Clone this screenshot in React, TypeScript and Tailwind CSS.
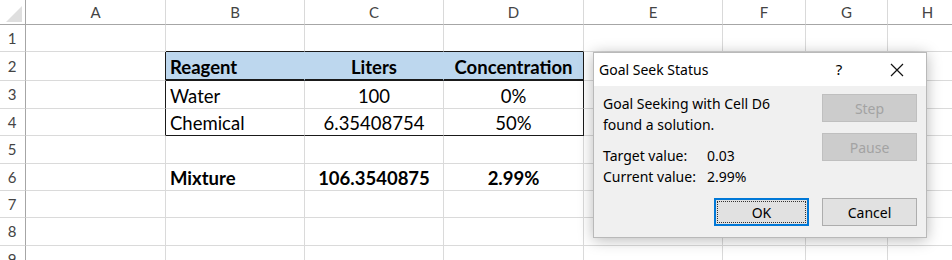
import React from "react";

type Col = { k: string; w: string };
const cols: Col[] = [
  { k: "A", w: "w-[140px]" },
  { k: "B", w: "w-[139px]" },
  { k: "C", w: "w-[139px]" },
  { k: "D", w: "w-[140px]" },
  { k: "E", w: "w-[139px]" },
  { k: "F", w: "w-[83px]" },
  { k: "G", w: "w-[82px]" },
  { k: "H", w: "w-[80px]" },
];

const rowHeights: Record<number, string> = {
  1: "h-[27px]",
  2: "h-[29px]",
  3: "h-[28px]",
  4: "h-[27px]",
  5: "h-[28px]",
  6: "h-[27px]",
  7: "h-[27px]",
  8: "h-[28px]",
  9: "h-[28px]",
};

type CellData = { t: string; align: "l" | "c"; bold?: boolean };
const data: Record<string, CellData> = {
  B2: { t: "Reagent", align: "l", bold: true },
  C2: { t: "Liters", align: "c", bold: true },
  D2: { t: "Concentration", align: "c", bold: true },
  B3: { t: "Water", align: "l" },
  C3: { t: "100", align: "c" },
  D3: { t: "0%", align: "c" },
  B4: { t: "Chemical", align: "l" },
  C4: { t: "6.35408754", align: "c" },
  D4: { t: "50%", align: "c" },
  B6: { t: "Mixture", align: "l", bold: true },
  C6: { t: "106.3540875", align: "c", bold: true },
  D6: { t: "2.99%", align: "c", bold: true },
};

function cellBorder(r: number, c: string): string {
  const inTable = r >= 2 && r <= 4 && (c === "B" || c === "C" || c === "D");
  let right = "border-r border-r-[#dadada]";
  let bottom = "border-b border-b-[#dadada]";
  let bg = "bg-white";
  if (r >= 2 && r <= 4 && (c === "A" || c === "D")) right = "border-r border-r-[#1a1a1a]";
  if (r === 1 && (c === "B" || c === "C" || c === "D")) bottom = "border-b border-b-[#1a1a1a]";
  if (r === 4 && inTable) bottom = "border-b border-b-[#1a1a1a]";
  if (r === 2 && inTable) {
    bg = "bg-[#bdd7ee]";
    bottom = "border-b-2 border-b-[#1a1a1a]";
    if (c !== "D") right = "border-r border-r-[#bdd7ee]";
  }
  return `${right} ${bottom} ${bg}`;
}

function Sheet() {
  const rows = [1, 2, 3, 4, 5, 6, 7, 8, 9];
  return (
    <div className="flex flex-col">
      <div className="flex h-[25px]">
        <div className="relative w-[26px] shrink-0 border-r border-b border-r-[#a6a6a6] border-b-[#a6a6a6] bg-white">
          <svg className="absolute left-[6px] top-[6px]" width="16" height="16" viewBox="0 0 16 16">
            <polygon points="16,0 16,16 0,16" fill="#dfdfdf" />
          </svg>
        </div>
        {cols.map((c) => (
          <div
            key={c.k}
            className={`${c.w} shrink-0 flex items-center justify-center border-r border-b border-r-[#d9d9d9] border-b-[#a6a6a6] bg-white text-[15px] text-[#444] pt-[1px]`}
            style={{ fontFamily: "Lato, 'Noto Sans', sans-serif" }}
          >
            {c.k}
          </div>
        ))}
      </div>
      {rows.map((r) => (
        <div key={r} className={`flex ${rowHeights[r]}`}>
          <div
            className="w-[26px] shrink-0 flex items-center justify-center border-r border-b border-r-[#a6a6a6] border-b-[#d9d9d9] bg-white text-[15px] text-[#444] pr-[1px]"
            style={{ fontFamily: "Lato, 'Noto Sans', sans-serif" }}
          >
            {r}
          </div>
          {cols.map((c) => {
            const d = data[`${c.k}${r}`];
            return (
              <div
                key={c.k}
                className={`${c.w} shrink-0 flex items-end pb-[1px] ${cellBorder(r, c.k)} ${
                  d && d.align === "c" ? "justify-center" : "justify-start pl-[4px]"
                } text-[18.5px] leading-[22px] text-black ${d && d.bold ? "font-bold" : "font-normal"}`}
                style={{ fontFamily: "Lato, sans-serif" }}
              >
                {d ? d.t : ""}
              </div>
            );
          })}
        </div>
      ))}
    </div>
  );
}

function Dialog() {
  return (
    <div
      className="absolute left-[593px] top-[52px] w-[334px] h-[186px] flex flex-col border border-[#b9b9b9] bg-[#f0f0f0] shadow-[0_2px_14px_rgba(0,0,0,0.28)]"
      style={{ fontFamily: "'Noto Sans', 'Open Sans', sans-serif" }}
    >
      <div className="h-[33px] shrink-0 flex items-center bg-white pl-[5px] text-[14px] text-black">
        <span className="flex-1">Goal Seek Status</span>
        <span className="w-[20px] text-center mr-[41px] text-[15px]">?</span>
        <svg className="mr-[22px]" width="14" height="14" viewBox="0 0 14 14">
          <path d="M1 1 L13 13 M13 1 L1 13" stroke="#111" strokeWidth="1.2" />
        </svg>
      </div>
      <div className="flex-1 flex flex-col px-[9px] pb-[11px] text-[14px] text-black">
        <div className="flex justify-between">
          <div className="flex flex-col pt-[7px]">
            <div className="leading-[21px]">Goal Seeking with Cell D6</div>
            <div className="leading-[21px]">found a solution.</div>
            <div className="mt-[11px] flex leading-[20px]">
              <span className="w-[104px]">Target value:</span>
              <span>0.03</span>
            </div>
            <div className="flex leading-[21px]">
              <span className="w-[104px]">Current value:</span>
              <span>2.99%</span>
            </div>
          </div>
          <div className="flex flex-col gap-[11px] pt-[8px]">
            <div className="w-[95px] h-[28px] flex items-center justify-center bg-[#cccccc] border border-[#bfbfbf] text-[#a3a3a3]">
              Step
            </div>
            <div className="w-[95px] h-[28px] flex items-center justify-center bg-[#cccccc] border border-[#bfbfbf] text-[#a3a3a3]">
              Pause
            </div>
          </div>
        </div>
        <div className="mt-auto flex justify-end gap-[13px]">
          <div className="w-[95px] h-[28px] flex items-center justify-center bg-[#e1e1e1] border-2 border-[#0078d7] p-[1px]">
            <div className="w-full h-full flex items-center justify-center border border-dotted border-[#333]">OK</div>
          </div>
          <div className="w-[95px] h-[28px] flex items-center justify-center bg-[#e1e1e1] border border-[#adadad]">
            Cancel
          </div>
        </div>
      </div>
    </div>
  );
}

export default function App() {
  return (
    <div className="relative w-[952px] h-[260px] overflow-hidden bg-white">
      <Sheet />
      <Dialog />
    </div>
  );
}
